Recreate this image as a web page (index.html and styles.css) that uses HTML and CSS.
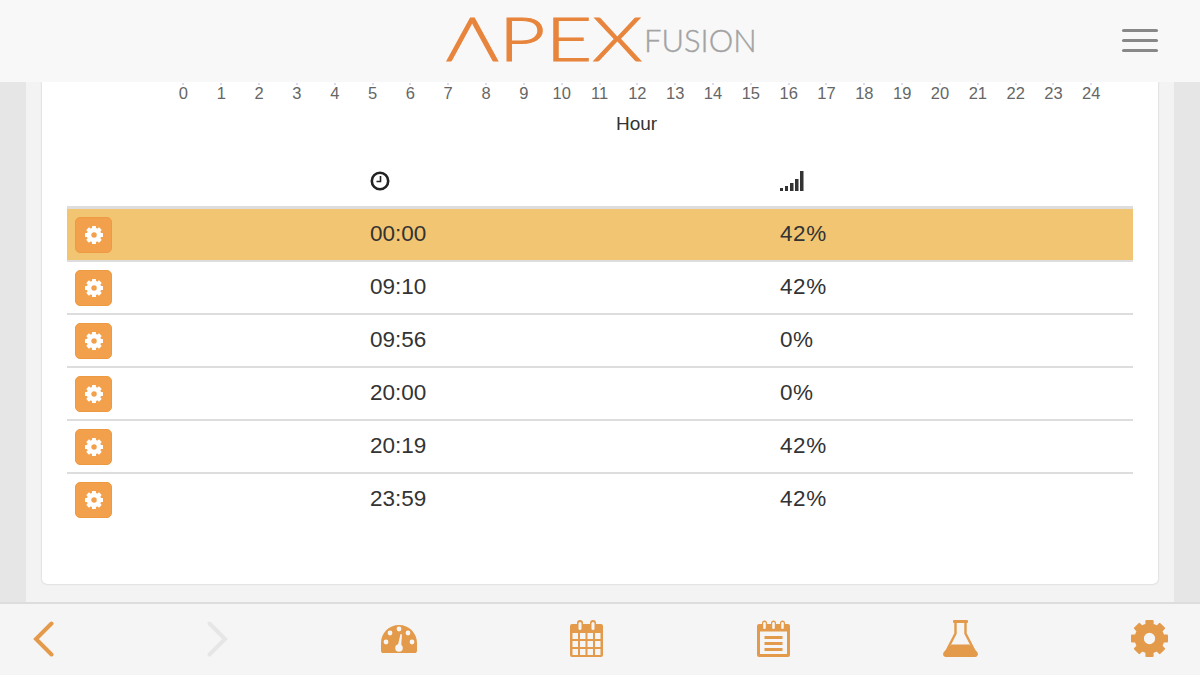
FILE: index.html
```html
<!DOCTYPE html>
<html lang="en">
<head>
    <meta charset="UTF-8">
    <meta name="viewport" content="width=device-width, initial-scale=1.0">
    <title>Apex Fusion</title>
    <link rel="stylesheet" href="styles.css">
</head>
<body>
    <svg class="defs" width="0" height="0">
        <symbol id="gear" viewBox="0 0 36 36">
            <circle cx="18" cy="18" r="10" fill="none" stroke="currentColor" stroke-width="9"/>
            <g fill="currentColor">
                <rect x="14" y="0" width="8" height="8" rx="1"/>
                <rect x="14" y="28" width="8" height="8" rx="1"/>
                <rect x="0" y="14" width="8" height="8" rx="1"/>
                <rect x="28" y="14" width="8" height="8" rx="1"/>
                <rect x="14" y="0" width="8" height="8" rx="1" transform="rotate(45 18 18)"/>
                <rect x="14" y="28" width="8" height="8" rx="1" transform="rotate(45 18 18)"/>
                <rect x="0" y="14" width="8" height="8" rx="1" transform="rotate(45 18 18)"/>
                <rect x="28" y="14" width="8" height="8" rx="1" transform="rotate(45 18 18)"/>
            </g>
        </symbol>
    </svg>

    <header class="topbar">
        <div class="logo">
            <span class="logo-apex">ΛPEX</span>
            <span class="logo-fusion">FUSION</span>
        </div>
        <div class="menu-button">
            <span></span>
            <span></span>
            <span></span>
        </div>
    </header>

    <main class="content">
        <div class="card">
            <div class="axis">
                <span>0</span><span>1</span><span>2</span><span>3</span><span>4</span>
                <span>5</span><span>6</span><span>7</span><span>8</span><span>9</span>
                <span>10</span><span>11</span><span>12</span><span>13</span><span>14</span>
                <span>15</span><span>16</span><span>17</span><span>18</span><span>19</span>
                <span>20</span><span>21</span><span>22</span><span>23</span><span>24</span>
            </div>
            <div class="axis-title">Hour</div>

            <table class="profile-table">
                <thead>
                    <tr>
                        <th class="col-edit"></th>
                        <th class="col-time">
                            <svg width="20" height="20" viewBox="0 0 20 20">
                                <circle cx="10" cy="10" r="8.2" fill="none" stroke="#222" stroke-width="2.6"/>
                                <path d="M10.5 5v5.5H6.5" fill="none" stroke="#222" stroke-width="1.6"/>
                            </svg>
                        </th>
                        <th>
                            <svg width="24" height="20" viewBox="0 0 24 20" fill="#333">
                                <rect x="0" y="17" width="3" height="3"/>
                                <rect x="5" y="15" width="3" height="5"/>
                                <rect x="10" y="12" width="3.5" height="8"/>
                                <rect x="15" y="8" width="3.5" height="12"/>
                                <rect x="20" y="0" width="3.5" height="20"/>
                            </svg>
                        </th>
                    </tr>
                </thead>
                <tbody>
                    <tr class="active">
                        <td><button class="edit-button"><svg width="18" height="18"><use href="#gear"/></svg></button></td>
                        <td>00:00</td>
                        <td>42%</td>
                    </tr>
                    <tr>
                        <td><button class="edit-button"><svg width="18" height="18"><use href="#gear"/></svg></button></td>
                        <td>09:10</td>
                        <td>42%</td>
                    </tr>
                    <tr>
                        <td><button class="edit-button"><svg width="18" height="18"><use href="#gear"/></svg></button></td>
                        <td>09:56</td>
                        <td>0%</td>
                    </tr>
                    <tr>
                        <td><button class="edit-button"><svg width="18" height="18"><use href="#gear"/></svg></button></td>
                        <td>20:00</td>
                        <td>0%</td>
                    </tr>
                    <tr>
                        <td><button class="edit-button"><svg width="18" height="18"><use href="#gear"/></svg></button></td>
                        <td>20:19</td>
                        <td>42%</td>
                    </tr>
                    <tr>
                        <td><button class="edit-button"><svg width="18" height="18"><use href="#gear"/></svg></button></td>
                        <td>23:59</td>
                        <td>42%</td>
                    </tr>
                </tbody>
            </table>
        </div>
    </main>

    <footer class="tabbar">
        <svg width="21" height="36" viewBox="0 0 21 36">
            <path d="M18.5 2.500L3 18l15.500 15.500" fill="none" stroke="#e39a4a" stroke-width="4" stroke-linecap="round"/>
        </svg>
        <svg width="21" height="36" viewBox="0 0 21 36">
            <path d="M2.500 2.500L18 18 2.500 33.500" fill="none" stroke="#e6e6e6" stroke-width="4" stroke-linecap="round"/>
        </svg>
        <svg width="36" height="30" viewBox="0 0 36 30">
            <path d="M1 29C-1 26 0 24 0 19 0 9 8 1 18 1s18 8 18 18c0 5 1 7-1 10z" fill="#e39a4a"/>
            <g fill="#f5f5f5">
                <circle cx="5" cy="18" r="2.400"/>
                <circle cx="9" cy="9" r="2.400"/>
                <circle cx="18" cy="5" r="2.400"/>
                <circle cx="27" cy="9" r="2.400"/>
                <circle cx="31" cy="18" r="2.400"/>
                <circle cx="18" cy="24" r="3.800"/>
                <path d="M16.500 23l3-13 1.500.4L20 24z"/>
            </g>
        </svg>
        <svg width="33" height="37" viewBox="0 0 33 37">
            <path d="M2 4h5V3a3 3 0 0 1 6 0v1h7V3a3 3 0 0 1 6 0v1h5a2 2 0 0 1 2 2v29a2 2 0 0 1-2 2H2a2 2 0 0 1-2-2V6a2 2 0 0 1 2-2z" fill="#e39a4a"/>
            <g fill="#f5f5f5">
                <rect x="8.500" y="2" width="3" height="8" rx="1.500"/>
                <rect x="21.500" y="2" width="3" height="8" rx="1.500"/>
                <rect x="2.500" y="13" width="5.500" height="6"/>
                <rect x="10" y="13" width="5.500" height="6"/>
                <rect x="17.500" y="13" width="5.500" height="6"/>
                <rect x="25" y="13" width="5.500" height="6"/>
                <rect x="2.500" y="21" width="5.500" height="6"/>
                <rect x="10" y="21" width="5.500" height="6"/>
                <rect x="17.500" y="21" width="5.500" height="6"/>
                <rect x="25" y="21" width="5.500" height="6"/>
                <rect x="2.500" y="29" width="5.500" height="6"/>
                <rect x="10" y="29" width="5.500" height="6"/>
                <rect x="17.500" y="29" width="5.500" height="6"/>
                <rect x="25" y="29" width="5.500" height="6"/>
            </g>
        </svg>
        <svg width="33" height="37" viewBox="0 0 33 37">
            <path d="M2 4h3V3a2.500 2.500 0 0 1 5 0v1h4V3a2.500 2.500 0 0 1 5 0v1h4V3a2.500 2.500 0 0 1 5 0v1h3a2 2 0 0 1 2 2v29a2 2 0 0 1-2 2H2a2 2 0 0 1-2-2V6a2 2 0 0 1 2-2z" fill="#e39a4a"/>
            <g fill="#f5f5f5">
                <rect x="6.200" y="2" width="2.600" height="7" rx="1.300"/>
                <rect x="15.200" y="2" width="2.600" height="7" rx="1.300"/>
                <rect x="24.200" y="2" width="2.600" height="7" rx="1.300"/>
                <rect x="3" y="11.500" width="27" height="22.500"/>
            </g>
            <g fill="#e39a4a">
                <rect x="7.500" y="16" width="18" height="3"/>
                <rect x="7.500" y="22" width="18" height="3"/>
                <rect x="7.500" y="28" width="18" height="3"/>
            </g>
        </svg>
        <svg width="35" height="37" viewBox="0 0 35 37">
            <rect x="10" y="0" width="15" height="3" rx="1" fill="#e39a4a"/>
            <path d="M12.500 3v10.500L3 32" fill="none" stroke="#e39a4a" stroke-width="2.400"/>
            <path d="M22.500 3v10.500L32 32" fill="none" stroke="#e39a4a" stroke-width="2.400"/>
            <path d="M8.500 24.500h18L34.200 32c1.500 2.500.3 5-2.200 5H3c-2.500 0-3.700-2.500-2.200-5z" fill="#e39a4a"/>
        </svg>
        <svg class="tab-gear" width="37" height="37"><use href="#gear"/></svg>
    </footer>
</body>
</html>
```

FILE: styles.css
```css
html, body {
    height: 100%;
}

body {
    margin: 0;
    display: flex;
    flex-direction: column;
    overflow: hidden;
    font-family: "Liberation Sans", Arial, sans-serif;
    background-color: #e6e6e6;
    color: #333;
}

.defs {
    position: absolute;
}

/* top bar */
.topbar {
    position: relative;
    flex: none;
    height: 82px;
    box-sizing: border-box;
    padding: 6px 0 0 446px;
    display: flex;
    background-color: #f8f8f8;
}

.logo {
    display: flex;
    align-items: flex-start;
    height: 62px;
    font-family: Lato, sans-serif;
}

.logo-apex {
    display: inline-block;
    width: 198px;
    font-size: 62px;
    line-height: 62px;
    font-weight: 300;
    color: #e8853d;
    -webkit-text-stroke: 1px #e8853d;
    transform: scaleX(1.3);
    transform-origin: left;
}

.logo-fusion {
    margin-top: 19px;
    font-size: 31px;
    line-height: 30px;
    font-weight: 300;
    color: #a3a3a3;
    -webkit-text-stroke: 0.4px #a3a3a3;
}

.menu-button {
    position: absolute;
    top: 29px;
    right: 42px;
    width: 36px;
    display: flex;
    flex-direction: column;
    gap: 7px;
}

.menu-button span {
    height: 3px;
    border-radius: 2px;
    background-color: #888;
}

/* page area */
.content {
    flex: 1;
    min-height: 0;
    margin: 0 26px;
    padding: 0 16px 18px;
    background-color: #f3f3f3;
}

.card {
    box-sizing: border-box;
    height: 100%;
    padding: 0 25px;
    background-color: #fff;
    border-radius: 0 0 5px 5px;
    box-shadow: 0 0 2px #bbb;
}

.axis {
    display: flex;
    padding: 0 0 0 97.500px;
    font-size: 16.500px;
    line-height: 19px;
    color: #666;
}

.axis span {
    width: 37.830px;
    flex: none;
    padding-top: 2px;
    text-align: center;
    background: linear-gradient(#dcd8f0, #dcd8f0) center 1px / 2px 2px no-repeat;
}

.axis-title {
    padding: 10px 0 0 549px;
    font-size: 19px;
    line-height: 21px;
}

/* table */
.profile-table {
    width: 100%;
    margin-top: 26px;
    border-collapse: collapse;
    table-layout: fixed;
    font-size: 22.500px;
}

.profile-table th {
    height: 46px;
    padding: 0;
    text-align: left;
    vertical-align: middle;
    border-bottom: 3px solid #ddd;
}

.profile-table th svg {
    display: block;
    margin-top: -4px;
}

.col-edit {
    width: 303px;
}

.col-time {
    width: 410px;
}

.profile-table td {
    height: 49px;
    padding: 0 0 2px;
    border-bottom: 2px solid #ddd;
}

.profile-table td:last-child {
    letter-spacing: 0.6px;
}

.profile-table tr:last-child td {
    border-bottom: none;
}

.profile-table tr.active td {
    background-color: #f2c572;
}

.edit-button {
    display: flex;
    align-items: center;
    justify-content: center;
    box-sizing: border-box;
    width: 37px;
    height: 36px;
    margin: 2px 0 0 8px;
    padding: 0;
    border: 1px solid #ee9a42;
    border-radius: 5px;
    background-color: #f3a04c;
    color: #fff;
}

/* bottom tabs */
.tabbar {
    flex: none;
    box-sizing: border-box;
    height: 73px;
    padding: 0 32px 2px 33px;
    display: flex;
    align-items: center;
    justify-content: space-between;
    background-color: #f5f5f5;
    border-top: 2px solid #ddd;
}

.tab-gear {
    color: #e39a4a;
}
```
